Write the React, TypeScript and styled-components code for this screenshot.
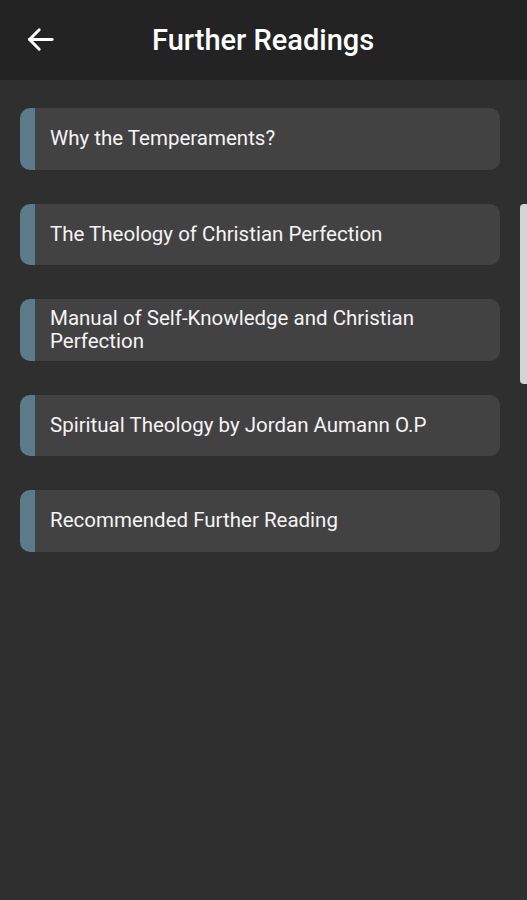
import React from "react";
import styled, { createGlobalStyle } from "styled-components";

const Global = createGlobalStyle`
  html, body { margin: 0; padding: 0; background: #2f2f2f; }
  body { font-family: Roboto, "Noto Sans", sans-serif; }
  * { box-sizing: border-box; }
`;

const Screen = styled.div`
  position: relative;
  width: 527px;
  height: 900px;
  background: #2f2f2f;
  overflow: hidden;
`;

const Header = styled.header`
  height: 80px;
  background: #232323;
  display: flex;
  align-items: center;
  padding-left: 25px;
`;

const BackButton = styled.button`
  width: 31px;
  height: 31px;
  padding: 0;
  border: none;
  background: transparent;
  display: flex;
  align-items: center;
  justify-content: center;
  color: #ffffff;
  margin-top: -2px;
`;

const Title = styled.h1`
  margin: -1px 0 0 96px;
  font-size: 29px;
  font-weight: 500;
  color: #ffffff;
`;

const List = styled.div`
  display: flex;
  flex-direction: column;
  gap: 34px;
  padding: 28px 27px 0 20px;
`;

const Card = styled.div`
  display: flex;
  align-items: center;
  min-height: 61.5px;
  background: #424242;
  border-radius: 10px;
  border-left: 15px solid #5b7b8b;
  padding: 6px 16px 6px 15px;
`;

const CardText = styled.span`
  font-size: 20.5px;
  line-height: 23px;
  color: #f4f4f4;
`;

const Scrollbar = styled.div`
  position: absolute;
  right: 0;
  top: 204px;
  width: 7px;
  height: 180px;
  background: #d4d4d4;
  border-radius: 4px 0 0 4px;
`;

const items = [
  "Why the Temperaments?",
  "The Theology of Christian Perfection",
  "Manual of Self-Knowledge and Christian Perfection",
  "Spiritual Theology by Jordan Aumann O.P",
  "Recommended Further Reading",
];

export default function App() {
  return (
    <Screen>
      <Global />
      <Header>
        <BackButton aria-label="Back">
          <svg width="31" height="31" viewBox="0 0 24 24" fill="none" stroke="#fff" strokeWidth="2.3" strokeLinecap="round" strokeLinejoin="round">
            <path d="M21 12H3.5" />
            <path d="M11 4.5L3.5 12l7.5 7.5" />
          </svg>
        </BackButton>
        <Title>Further Readings</Title>
      </Header>
      <List>
        {items.map((t) => (
          <Card key={t}>
            <CardText>{t}</CardText>
          </Card>
        ))}
      </List>
      <Scrollbar />
    </Screen>
  );
}
